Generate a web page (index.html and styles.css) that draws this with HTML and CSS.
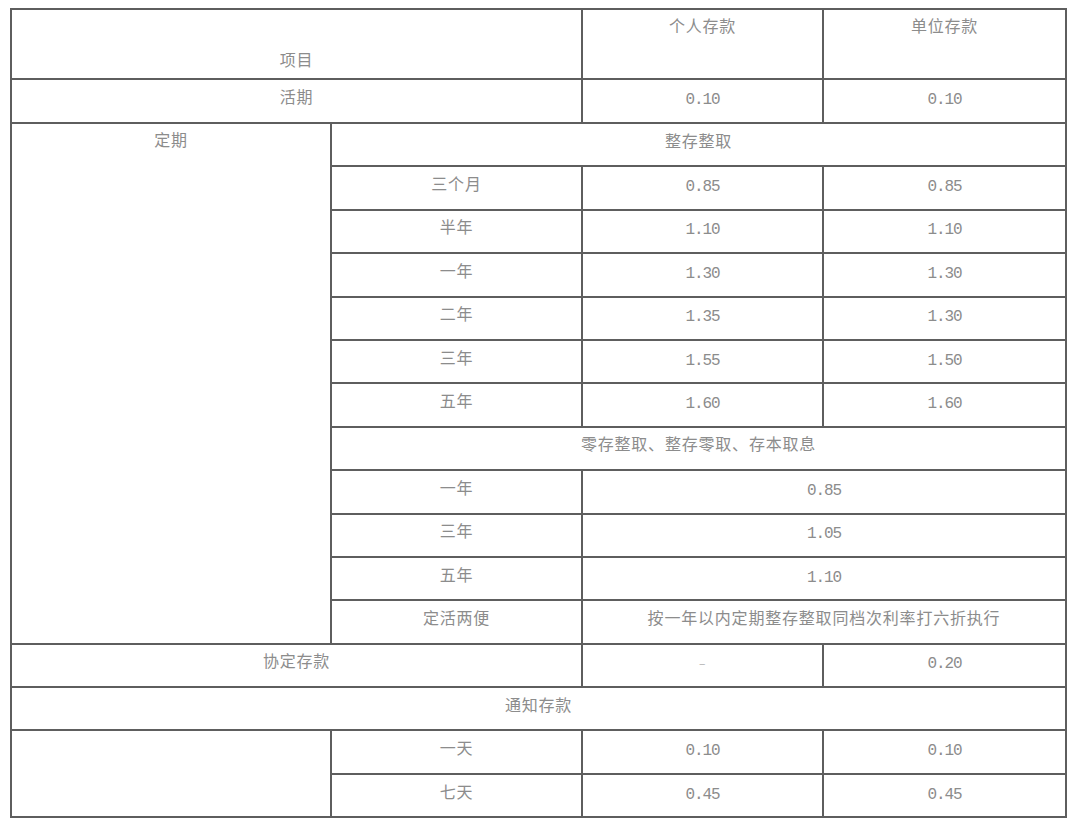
FILE: index.html
```html
<!DOCTYPE html>
<html lang="zh-CN">
<head>
<meta charset="utf-8">
<title>存款利率表</title>
<link rel="stylesheet" href="styles.css">
</head>
<body>
<table class="rates">
  <colgroup>
    <col class="c-a"><col class="c-b"><col class="c-c"><col class="c-d">
  </colgroup>
  <tbody>
    <tr class="head">
      <td colspan="2" class="bottom">项目</td>
      <td class="top">个人存款</td>
      <td class="top">单位存款</td>
    </tr>
    <tr class="r44">
      <td colspan="2">活期</td>
      <td class="num">0.10</td>
      <td class="num">0.10</td>
    </tr>
    <tr>
      <td rowspan="12" class="top">定期</td>
      <td colspan="3">整存整取</td>
    </tr>
    <tr><td>三个月</td><td class="num">0.85</td><td class="num">0.85</td></tr>
    <tr><td>半年</td><td class="num">1.10</td><td class="num">1.10</td></tr>
    <tr><td>一年</td><td class="num">1.30</td><td class="num">1.30</td></tr>
    <tr><td>二年</td><td class="num">1.35</td><td class="num">1.30</td></tr>
    <tr><td>三年</td><td class="num">1.55</td><td class="num">1.50</td></tr>
    <tr><td>五年</td><td class="num">1.60</td><td class="num">1.60</td></tr>
    <tr><td colspan="3">零存整取、整存零取、存本取息</td></tr>
    <tr><td>一年</td><td colspan="2" class="num">0.85</td></tr>
    <tr><td>三年</td><td colspan="2" class="num">1.05</td></tr>
    <tr><td>五年</td><td colspan="2" class="num">1.10</td></tr>
    <tr><td>定活两便</td><td colspan="2">按一年以内定期整存整取同档次利率打六折执行</td></tr>
    <tr>
      <td colspan="2">协定存款</td>
      <td class="dash">–</td>
      <td class="num">0.20</td>
    </tr>
    <tr><td colspan="4">通知存款</td></tr>
    <tr>
      <td rowspan="2"></td>
      <td>一天</td><td class="num">0.10</td><td class="num">0.10</td>
    </tr>
    <tr><td>七天</td><td class="num">0.45</td><td class="num">0.45</td></tr>
  </tbody>
</table>
</body>
</html>
```

FILE: styles.css
```css
html, body {
  margin: 0;
  padding: 0;
  background: #ffffff;
}

body {
  padding: 8px 0 0 10px;
}

.rates {
  border-collapse: collapse;
  table-layout: fixed;
  width: 1055px;
  font-family: "Noto Sans CJK SC", "Noto Sans", sans-serif;
  font-size: 16px;
  letter-spacing: 0.8px;
  color: #8c8c8c;
}

.c-a { width: 320px; }
.c-b { width: 251px; }
.c-c { width: 241px; }
.c-d { width: 243px; }

.rates td {
  border: 2px solid #5e5e5e;
  height: 31.4px;
  padding: 0 0 10px 0;
  line-height: 24px;
  text-align: center;
  vertical-align: middle;
}

.rates tr.head td {
  height: 65px;
}

.rates tr.r44 td {
  height: 32px;
}

.rates td.top {
  vertical-align: top;
  padding: 3px 0 0 0;
}

.rates tr.head td.bottom {
  vertical-align: bottom;
  height: 61px;
  padding: 0 0 7px 0;
}

.rates td.num {
  font-family: "Liberation Mono", monospace;
  font-size: 16px;
  letter-spacing: -1.1px;
  height: 37.4px;
  padding: 1px 0 3px 0;
}

.rates tr.r44 td.num {
  height: 38px;
}

.rates td.dash {
  color: #b0b0b0;
  font-size: 12px;
  height: 37.4px;
  padding: 0 0 4px 0;
}
```
